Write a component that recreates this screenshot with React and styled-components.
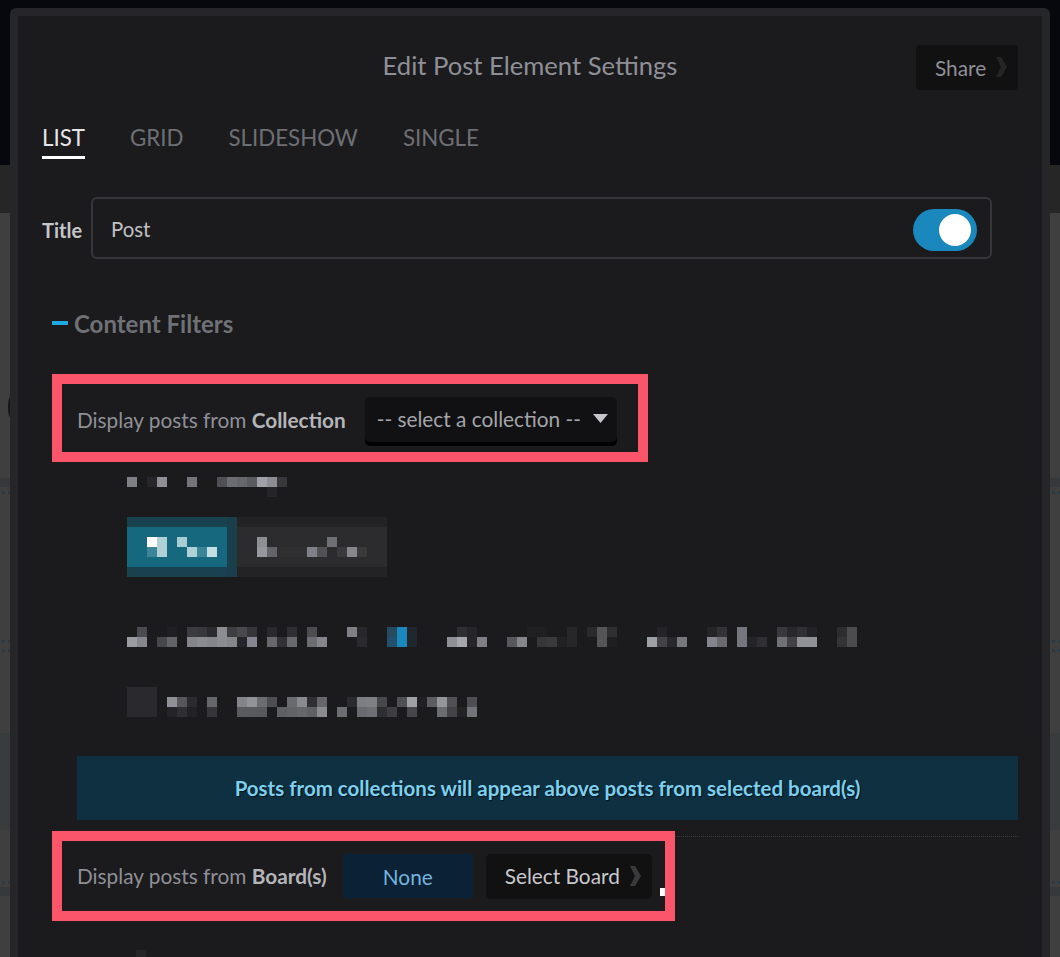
import React from 'react';
import styled, { createGlobalStyle } from 'styled-components';

const GlobalStyle = createGlobalStyle`
	html, body {
		margin: 0;
		padding: 0;
		height: 957px;
		overflow: hidden;
		background: #3f3f3f;
	}
	* {
		box-sizing: border-box;
	}
`;

const Page = styled.div`
	position: relative;
	height: 957px;
	overflow: hidden;
	padding: 8px 10px 0;
	font-family: Lato, "Open Sans", sans-serif;
	background: linear-gradient(#07080d 0 165px, #262626 165px 213px, #3f3f3f 213px);
`;

// bits of the page behind the modal that show on its left and right
const SideStrip = styled.svg`
	position: absolute;
	top: 0;
	${props => props.$side}: 0;
	width: 10px;
	height: 957px;
`;

const Modal = styled.div`
	position: relative;
	height: 1000px;
	padding: 29px 24px 0;
	background: #1b1b1d;
	border: 8px solid #25252a;
	border-radius: 6px 6px 0 0;
`;

const Header = styled.header`
	display: grid;
	grid-template-columns: 1fr auto 1fr;
	align-items: center;
	height: 45px;
`;

const Heading = styled.h1`
	grid-column: 2;
	margin: 0 0 5px;
	font-size: 25.6px;
	font-weight: 400;
	line-height: 30px;
	color: #8f9097;
`;

const ShareButton = styled.button`
	grid-column: 3;
	justify-self: end;
	display: flex;
	align-items: center;
	width: 102px;
	height: 45px;
	padding: 0 0 1px 19px;
	border: 0;
	border-radius: 4px;
	background: #111112;
	font: 400 20.8px Lato, sans-serif;
	color: #8f9097;
`;

const Chevron = styled.svg`
	flex: none;
	width: 11px;
	height: 20px;
	margin-left: ${props => props.$gap}px;
	color: ${props => props.$color};
`;

const Tabs = styled.nav`
	display: flex;
	gap: 45px;
	margin-top: 33px;
`;

const Tab = styled.a`
	height: 36px;
	font-size: 22.3px;
	line-height: 30px;
	color: ${props => (props.$active ? '#e6e6e8' : '#6e6f74')};
	border-bottom: 3px solid ${props => (props.$active ? '#fff' : 'transparent')};
`;

const TitleRow = styled.div`
	display: flex;
	align-items: center;
	margin: 38px 26px 0 0;
`;

const TitleLabel = styled.label`
	width: 49px;
	padding-top: 4px;
	font-size: 20px;
	font-weight: 700;
	color: #c5c6c9;
`;

const TitleField = styled.div`
	flex: 1;
	display: flex;
	align-items: center;
	justify-content: space-between;
	height: 62px;
	padding: 1px 13px 0 18px;
	border: 2px solid #36363b;
	border-radius: 6px;
	font-size: 20.4px;
	color: #c0c1c4;
`;

const Toggle = styled.span`
	display: flex;
	align-items: center;
	justify-content: flex-end;
	width: 64px;
	height: 42px;
	margin-top: 3px;
	padding-right: 6px;
	border-radius: 21px;
	background: #1a87bd;

	&::after {
		content: '';
		width: 32px;
		height: 32px;
		border-radius: 50%;
		background: #fff;
	}
`;

const SectionHeading = styled.h2`
	display: flex;
	align-items: center;
	gap: 6px;
	height: 30px;
	margin: 49px 0 0 10px;
	font-size: 24px;
	font-weight: 700;
	color: #707176;

	&::before {
		content: '';
		width: 16px;
		height: 4px;
		background: #1ea7e1;
	}
`;

// red box drawn on the screenshot around the important rows
const Callout = styled.div`
	position: relative;
	display: flex;
	align-items: center;
	width: ${props => props.$width}px;
	height: ${props => props.$height}px;
	margin-left: 10px;
	padding-left: 15px;
	border: 10px solid #fa556b;
	background: #1b1b1d;
`;

const FirstCallout = styled(Callout)`
	margin-top: 36px;
	padding-top: 2px;
`;

const BoardCallout = styled(Callout)`
	margin-top: -6px;
`;

const RowText = styled.span`
	font-size: 20.8px;
	color: #8f9097;
	white-space: nowrap;

	b {
		font-weight: 700;
		color: #b4b5b9;
	}
`;

const BoardText = styled(RowText)`
	margin-bottom: 2px;
`;

const CollectionSelect = styled.div`
	display: flex;
	align-items: center;
	justify-content: space-between;
	width: 252px;
	height: 49px;
	margin: 5px 0 0 19px;
	padding: 0 9px 6px 12px;
	border-radius: 5px;
	background: #111113;
	box-shadow: inset 0 -4px 0 #020203;
	font-size: 20.8px;
	color: #a4a5aa;
	white-space: nowrap;
`;

const Caret = styled.svg`
	width: 15px;
	height: 9px;
	color: #c5c6c9;
`;

const MosaicSvg = styled.svg`
	display: block;
	margin: ${props => props.$top}px 0 0 ${props => props.$left}px;
`;

const Notice = styled.div`
	display: flex;
	align-items: center;
	justify-content: center;
	height: 64px;
	margin: 39px 0 0 35px;
	background: #0e3040;
	font-size: 20.5px;
	font-weight: 700;
	color: #7fcfef;
	text-shadow: 1px 1px 1px #04141c;
`;

const Divider = styled.hr`
	height: 0;
	margin: 16px 0 0 35px;
	border: 0;
	border-top: 1px dotted #3a3a3d;
`;

const NoneTag = styled.span`
	display: flex;
	align-items: center;
	justify-content: center;
	width: 130px;
	height: 44px;
	margin-left: 16px;
	background: #0a2136;
	font-size: 20.8px;
	color: #74b4dd;
`;

const BoardButton = styled.button`
	display: flex;
	align-items: center;
	width: 166px;
	height: 45px;
	margin-left: 13px;
	padding: 0 0 1px 19px;
	border: 0;
	border-radius: 5px;
	background: #111112;
	font: 400 20.8px Lato, sans-serif;
	color: #c8c9cc;
	white-space: nowrap;
`;

const Speck = styled.i`
	position: absolute;
	right: 0;
	bottom: 15px;
	width: 5px;
	height: 8px;
	background: #fff;
`;

// pixelated (redacted) blocks, one entry per 10px cell: [col, row, colour]
const solid = (from, to, rowFrom, rowTo, color) => {
	const out = [];
	for (let c = from; c <= to; c++) {
		for (let r = rowFrom; r <= rowTo; r++) out.push([c, r, color]);
	}
	return out;
};

const line = (row, cells) => Object.entries(cells).map(([col, color]) => [Number(col), row, color]);

const redacted = [
	...line(0, { 0: '#7e7f87', 2: '#26262b', 3: '#8f9097', 6: '#73747c', 9: '#4f4f55', 10: '#6c6d73', 11: '#66676c', 12: '#5a5b61', 13: '#a0a1a9', 14: '#8c8d95', 15: '#37373c' }),
	...line(1, { 14: '#26262a' }),
	...solid(0, 9, 4, 4, '#1a424e'),
	...solid(0, 9, 9, 9, '#1a424e'),
	...solid(0, 9, 5, 8, '#16687f'),
	...solid(10, 10, 4, 9, '#1a3f4a'),
	...solid(11, 25, 4, 4, '#232325'),
	...solid(11, 25, 9, 9, '#232325'),
	...solid(11, 25, 5, 8, '#2c2c2f'),
	...line(6, { 2: '#ffffff', 3: '#aed0d6', 5: '#a8ccd4', 13: '#8e8f95', 20: '#6f7075' }),
	...line(7, { 2: '#3c8498', 3: '#aed0d6', 6: '#aed0d6', 7: '#3c8498', 8: '#c4dfe3', 13: '#97989e', 14: '#636469', 15: '#303033', 16: '#303033', 17: '#303033', 18: '#7f8088', 19: '#515156', 21: '#3a3a3d', 22: '#86878c', 23: '#3a3a3d' }),
	...line(15, { 1: '#4a4a50', 4: '#1f1f23', 6: '#3b3b40', 7: '#37373c', 8: '#2b2b2f', 9: '#8c8d92', 10: '#3d3d42', 11: '#48484d', 12: '#36363a', 14: '#2a2a2e', 16: '#2e2e33', 18: '#4c4c51', 22: '#808186', 23: '#26262b', 26: '#264a60', 27: '#1a87bd', 28: '#21272e', 33: '#2f2f33', 34: '#26262a', 40: '#1f1f22', 41: '#1f1f22', 44: '#27272a', 46: '#2a2a2d', 47: '#555558', 48: '#2f2f32', 53: '#242428', 58: '#252528', 59: '#333337', 61: '#75767e', 65: '#39393d', 66: '#28282c', 67: '#303034', 68: '#232327', 71: '#2d2d30', 72: '#4c4c4e' }),
	...line(16, { 0: '#9b9ca2', 1: '#86878d', 3: '#47474b', 4: '#636468', 6: '#84858b', 7: '#8a8b90', 8: '#85868c', 9: '#8b8c93', 10: '#85868c', 11: '#25252a', 12: '#85868f', 14: '#67686d', 15: '#323236', 16: '#68696e', 18: '#6c6d72', 19: '#85868d', 23: '#2a2a2e', 26: '#22506c', 27: '#1a87bd', 28: '#21272e', 32: '#8f9095', 33: '#a6a7ad', 34: '#26262a', 35: '#7f8087', 38: '#57585c', 39: '#85868c', 41: '#363639', 42: '#3a3a3d', 43: '#212124', 44: '#272729', 47: '#555558', 48: '#1f1f22', 52: '#9da0a7', 53: '#434347', 54: '#29292d', 55: '#77787c', 58: '#84858d', 59: '#6a6b70', 61: '#75767e', 62: '#242428', 63: '#2f2f33', 65: '#717277', 66: '#424246', 67: '#919297', 68: '#919297', 71: '#333336', 72: '#4c4c4e' }),
	...solid(0, 2, 21, 23, '#2a2a2e'),
	...line(22, { 4: '#909198', 5: '#56565b', 6: '#2b2b2f', 8: '#66676c', 11: '#84858b', 12: '#929399', 13: '#6c6d71', 14: '#4e4e52', 16: '#6a6b70', 17: '#8a8b90', 18: '#303034', 19: '#66676b', 22: '#2b2b2f', 23: '#7d7e85', 24: '#7f8086', 25: '#48484c', 27: '#4f4f54', 28: '#a0a1a7', 29: '#212124', 30: '#5c5d61', 31: '#95969b', 32: '#515155', 34: '#4f4f53' }),
	...line(23, { 4: '#242428', 5: '#2f2f33', 6: '#222226', 8: '#36363a', 11: '#5a5b5f', 12: '#595a5e', 13: '#58595d', 15: '#5f6064', 16: '#626367', 17: '#66676b', 18: '#5f6063', 19: '#8a8b8f', 21: '#6c6d72', 23: '#6a6b70', 24: '#6e6f74', 25: '#2e2e32', 26: '#3e3e42', 28: '#47474b', 31: '#6b6c70', 32: '#434347', 33: '#232326', 34: '#73747a' }),
];

const Mosaic = ({ cells, cols, rows, top, left }) => (
	<MosaicSvg $top={top} $left={left} width={cols * 10} height={rows * 10} viewBox={`0 0 ${cols * 10} ${rows * 10}`} shapeRendering="crispEdges">
		{cells.map(([c, r, color], i) => (
			<rect key={i} x={c * 10} y={r * 10} width="10" height="10" fill={color} />
		))}
	</MosaicSvg>
);

const ChevronIcon = ({ gap, color }) => (
	<Chevron $gap={gap} $color={color} viewBox="0 0 11 20">
		<path d="M0 0h5l6 10-6 10H0l5-10z" fill="currentColor" />
	</Chevron>
);

const dotRows = [491, 640, 649, 881];
const bands = [[478, 9, '#35393c'], [733, 97, '#393c3c'], [887, 9, '#35393c']];

const Strip = ({ side }) => (
	<SideStrip $side={side} viewBox="0 0 10 957">
		{bands.map(([y, h, fill]) => (
			<rect key={y} x="0" y={y} width="10" height={h} fill={fill} />
		))}
		{dotRows.map(y => (
			<g key={y} fill="#2c3a46">
				<rect x="2" y={y} width="3" height="3" />
				<rect x="8" y={y} width="2" height="3" />
			</g>
		))}
		{side === 'left' && <ellipse cx="10" cy="407" rx="2" ry="10" fill="#14161a" />}
	</SideStrip>
);

export default function App() {
	return (
		<Page>
			<GlobalStyle />
			<Strip side="left" />
			<Strip side="right" />
			<Modal>
				<Header>
					<Heading>Edit Post Element Settings</Heading>
					<ShareButton>
						Share
						<ChevronIcon gap={10} color="#252527" />
					</ShareButton>
				</Header>
				<Tabs>
					<Tab $active>LIST</Tab>
					<Tab>GRID</Tab>
					<Tab>SLIDESHOW</Tab>
					<Tab>SINGLE</Tab>
				</Tabs>
				<TitleRow>
					<TitleLabel>Title</TitleLabel>
					<TitleField>
						Post
						<Toggle />
					</TitleField>
				</TitleRow>
				<SectionHeading>Content Filters</SectionHeading>
				<FirstCallout $width={596} $height={88}>
					<RowText>Display posts from <b>Collection</b></RowText>
					<CollectionSelect>
						-- select a collection --
						<Caret viewBox="0 0 15 9">
							<path d="M0 0h15L7.500 9z" fill="currentColor" />
						</Caret>
					</CollectionSelect>
				</FirstCallout>
				<Mosaic cells={redacted} cols={74} rows={24} top={15} left={85} />
				<Notice>Posts from collections will appear above posts from selected board(s)</Notice>
				<Divider />
				<BoardCallout $width={623} $height={90}>
					<BoardText>Display posts from <b>Board(s)</b></BoardText>
					<NoneTag>None</NoneTag>
					<BoardButton>
						Select Board
						<ChevronIcon gap={10} color="#3a3a3c" />
					</BoardButton>
					<Speck />
				</BoardCallout>
				<Mosaic cells={[[0, 0, '#252528']]} cols={1} rows={1} top={29} left={94} />
			</Modal>
		</Page>
	);
}
